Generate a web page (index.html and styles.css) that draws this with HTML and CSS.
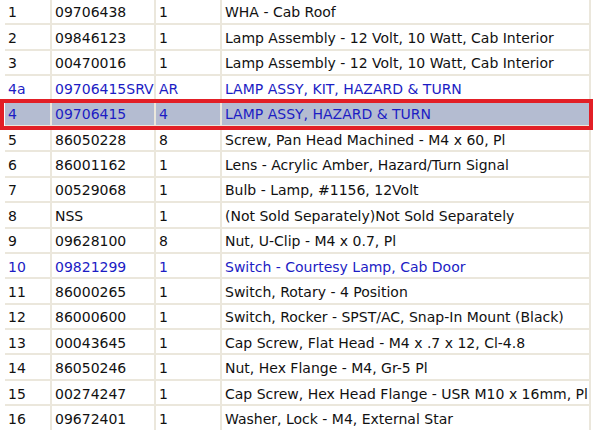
FILE: index.html
```html
<!DOCTYPE html>
<html>
<head>
<meta charset="utf-8">
<link rel="stylesheet" href="styles.css">
</head>
<body>
<div class="wrap">
  <table class="parts">
    <colgroup>
      <col class="c-ref"><col class="c-part"><col class="c-qty"><col class="c-desc">
    </colgroup>
    <tbody>
      <tr><td>1</td><td>09706438</td><td>1</td><td>WHA - Cab Roof</td></tr>
      <tr><td>2</td><td>09846123</td><td>1</td><td>Lamp Assembly - 12 Volt, 10 Watt, Cab Interior</td></tr>
      <tr><td>3</td><td>00470016</td><td>1</td><td>Lamp Assembly - 12 Volt, 10 Watt, Cab Interior</td></tr>
      <tr class="link"><td>4a</td><td>09706415SRV</td><td>AR</td><td>LAMP ASSY, KIT, HAZARD &amp; TURN</td></tr>
      <tr class="link selected"><td>4</td><td>09706415</td><td>4</td><td>LAMP ASSY, HAZARD &amp; TURN</td></tr>
      <tr><td>5</td><td>86050228</td><td>8</td><td>Screw, Pan Head Machined - M4 x 60, Pl</td></tr>
      <tr><td>6</td><td>86001162</td><td>1</td><td>Lens - Acrylic Amber, Hazard/Turn Signal</td></tr>
      <tr><td>7</td><td>00529068</td><td>1</td><td>Bulb - Lamp, #1156, 12Volt</td></tr>
      <tr><td>8</td><td>NSS</td><td>1</td><td>(Not Sold Separately)Not Sold Separately</td></tr>
      <tr><td>9</td><td>09628100</td><td>8</td><td>Nut, U-Clip - M4 x 0.7, Pl</td></tr>
      <tr class="link"><td>10</td><td>09821299</td><td>1</td><td>Switch - Courtesy Lamp, Cab Door</td></tr>
      <tr><td>11</td><td>86000265</td><td>1</td><td>Switch, Rotary - 4 Position</td></tr>
      <tr><td>12</td><td>86000600</td><td>1</td><td>Switch, Rocker - SPST/AC, Snap-In Mount (Black)</td></tr>
      <tr><td>13</td><td>00043645</td><td>1</td><td>Cap Screw, Flat Head - M4 x .7 x 12, Cl-4.8</td></tr>
      <tr><td>14</td><td>86050246</td><td>1</td><td>Nut, Hex Flange - M4, Gr-5 Pl</td></tr>
      <tr><td>15</td><td>00274247</td><td>1</td><td>Cap Screw, Hex Head Flange - USR M10 x 16mm, Pl</td></tr>
      <tr><td>16</td><td>09672401</td><td>1</td><td>Washer, Lock - M4, External Star</td></tr>
    </tbody>
  </table>
  <div class="highlight-box"></div>
</div>
</body>
</html>
```

FILE: styles.css
```css
html, body {
  margin: 0;
  padding: 0;
  background: #ffffff;
  overflow: hidden;
}

.wrap {
  position: relative;
  padding-left: 5px;
  margin-top: -1px;
}

.parts {
  border-collapse: collapse;
  table-layout: fixed;
  width: 585px;
  font-family: "DejaVu Sans", Verdana, sans-serif;
  font-size: 14px;
  color: #111111;
}

.c-ref { width: 46px; }
.c-part { width: 104px; }
.c-qty { width: 66px; }
.c-desc { width: 369px; }

.parts td {
  height: 25.4px;
  padding: 2px 0 0 3px;
  box-sizing: border-box;
  border-bottom: 2px solid #ebe7dc;
  border-left: 2px solid #ebe7dc;
  white-space: nowrap;
  overflow: hidden;
  vertical-align: middle;
  line-height: 16px;
}

.parts td:first-child {
  border-left: none;
}

.parts td:last-child {
  border-right: 2px solid #ebe7dc;
}

.parts tr.link td {
  color: #1c1cc4;
}

.parts tr.selected td {
  background: #b4bcd1;
}

.highlight-box {
  position: absolute;
  left: 0;
  top: 100px;
  width: 593px;
  height: 31px;
  box-sizing: border-box;
  border: 4px solid #e21f26;
  pointer-events: none;
}
```
